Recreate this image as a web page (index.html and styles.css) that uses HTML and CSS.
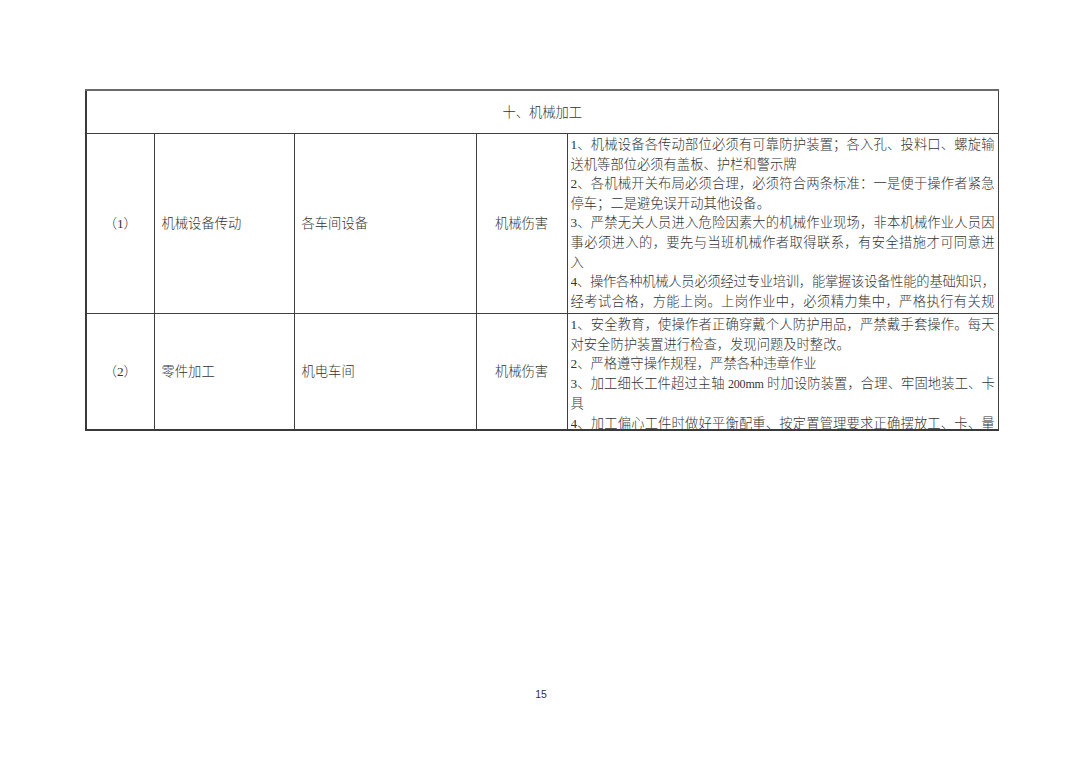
FILE: index.html
```html
<!DOCTYPE html>
<html lang="zh-CN">
<head>
<meta charset="utf-8">
<title>十、机械加工</title>
<link rel="stylesheet" href="styles.css">
</head>
<body>
<div class="page">
  <table class="sheet">
    <colgroup>
      <col class="c-no">
      <col class="c-item">
      <col class="c-place">
      <col class="c-risk">
      <col class="c-desc">
    </colgroup>
    <tr>
      <td class="title" colspan="5">十、机械加工</td>
    </tr>
    <tr>
      <td class="center">（1）</td>
      <td class="left">机械设备传动</td>
      <td class="left">各车间设备</td>
      <td class="center">机械伤害</td>
      <td class="desc">
        <div class="clip tall">
          <div class="ln full">1、机械设备各传动部位必须有可靠防护装置；各入孔、投料口、螺旋输</div>
          <div class="ln">送机等部位必须有盖板、护栏和警示牌</div>
          <div class="ln full">2、各机械开关布局必须合理，必须符合两条标准：一是便于操作者紧急</div>
          <div class="ln">停车；二是避免误开动其他设备。</div>
          <div class="ln full">3、严禁无关人员进入危险因素大的机械作业现场，非本机械作业人员因</div>
          <div class="ln full">事必须进入的，要先与当班机械作者取得联系，有安全措施才可同意进</div>
          <div class="ln">入</div>
          <div class="ln full tight">4、操作各种机械人员必须经过专业培训，能掌握该设备性能的基础知识，</div>
          <div class="ln full">经考试合格，方能上岗。上岗作业中，必须精力集中，严格执行有关规</div>
        </div>
      </td>
    </tr>
    <tr>
      <td class="center">（2）</td>
      <td class="left">零件加工</td>
      <td class="left">机电车间</td>
      <td class="center">机械伤害</td>
      <td class="desc">
        <div class="clip short">
          <div class="ln full">1、安全教育，使操作者正确穿戴个人防护用品，严禁戴手套操作。每天</div>
          <div class="ln">对安全防护装置进行检查，发现问题及时整改。</div>
          <div class="ln">2、严格遵守操作规程，严禁各种违章作业</div>
          <div class="ln full slight">3、加工细长工件超过主轴 <span class="num">200mm</span> 时加设防装置，合理、牢固地装工、卡</div>
          <div class="ln">具</div>
          <div class="ln full">4、加工偏心工件时做好平衡配重、按定置管理要求正确摆放工、卡、量</div>
        </div>
      </td>
    </tr>
  </table>
  <div class="folio">15</div>
</div>
</body>
</html>
```

FILE: styles.css
```css
html, body {
  margin: 0;
  padding: 0;
  background: #ffffff;
}

.page {
  width: 1080px;
  height: 764px;
  box-sizing: border-box;
  padding: 89px 0 0 85px;
  font-family: "Liberation Serif", "Noto Sans CJK SC", serif;
  color: #333333;
}

.sheet {
  width: 912px;
  table-layout: fixed;
  border-collapse: collapse;
  border-top: 2px solid #6a6a6a;
  border-left: 2px solid #3a3a3a;
  border-bottom: 2px solid #3a3a3a;
  border-right: 1px solid #555555;
  font-size: 13.3px;
  font-weight: 300;
}

.c-no { width: 68px; }
.c-item { width: 140px; }
.c-place { width: 182px; }
.c-risk { width: 91px; }
.c-desc { width: 431px; }

.sheet td {
  border: 1px solid #3f3f3f;
  padding: 0;
  vertical-align: middle;
  line-height: 19.6px;
}

.sheet td.title {
  height: 41px;
  text-align: center;
  padding-top: 1px;
  border-top: 2px solid #6a6a6a;
  border-left: 2px solid #3a3a3a;
}

.sheet td.center {
  text-align: center;
}

.sheet td.left {
  text-align: left;
  padding-left: 7px;
}

.sheet td.desc {
  padding: 0 3px 0 3px;
  vertical-align: top;
}

.clip {
  overflow: hidden;
  box-sizing: border-box;
  padding-top: 1px;
}

.clip.tall {
  height: 179px;
}

.clip.short {
  height: 115px;
  padding-top: 1px;
}

.ln {
  text-align: left;
}

.ln.full {
  text-align: justify;
  text-align-last: justify;
}

.ln.tight {
  letter-spacing: -0.4px;
}

.ln.slight {
  letter-spacing: -0.2px;
}

.num {
  font-size: 12px;
}

.folio {
  width: 912px;
  margin-top: 257px;
  text-align: center;
  font-family: "Liberation Sans", "DejaVu Sans", sans-serif;
  font-size: 10.5px;
  color: #333333;
}
```
